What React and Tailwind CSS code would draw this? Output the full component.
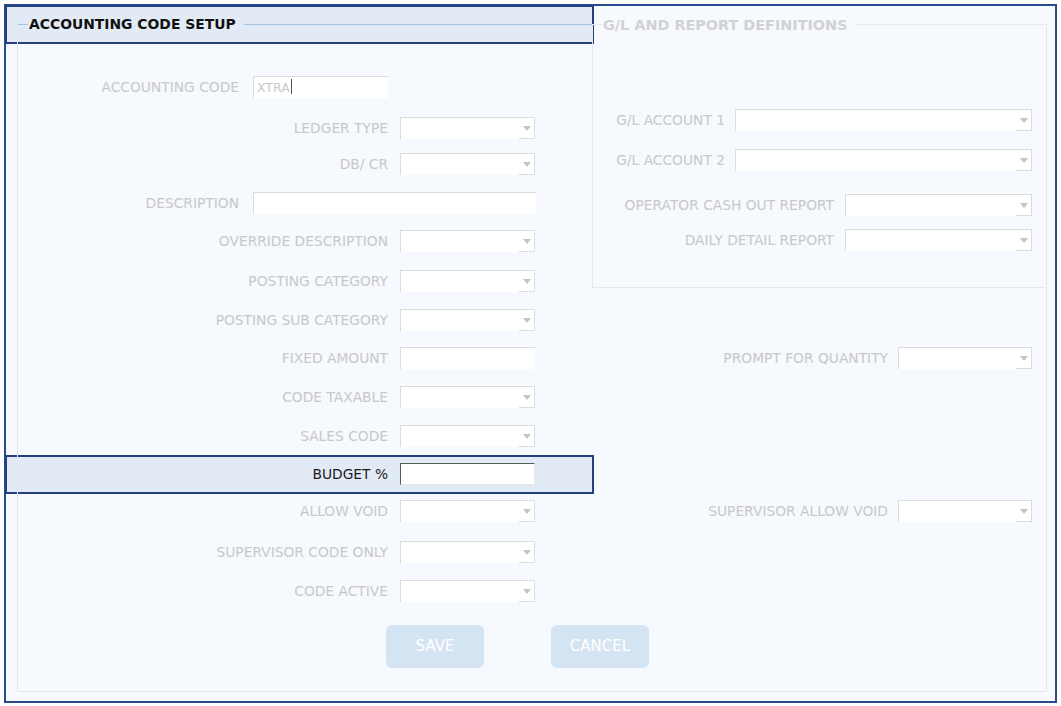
import React from "react";

const font = { fontFamily: '"DejaVu Sans", Verdana, sans-serif' };

function Arrow() {
  return (
    <div className="flex h-full w-[16px] items-center justify-center border-b border-r border-[#dcdcdc] bg-white">
      <svg width="8" height="5" viewBox="0 0 8 5">
        <polygon points="0,0 8,0 4,5" fill="#c4c4c4" />
      </svg>
    </div>
  );
}

function Select({ w }) {
  return (
    <div className={`flex h-[22px] shrink-0 justify-end border-l border-t border-[#dcdcdc] bg-white ${w}`}>
      <Arrow />
    </div>
  );
}

function TextBox({ w, value, active }) {
  return (
    <div
      className={`flex h-[22px] shrink-0 items-center bg-white pl-[3px] text-[12.5px] ${w} ${
        active
          ? "border-l border-t border-[#5a5a5a] border-r border-b border-r-[#e6e6e6] border-b-[#e6e6e6]"
          : "border-l border-t border-[#dcdcdc]"
      }`}
    >
      {value ? (
        <span className="text-[#c9c9c9]">
          {value}
          <span className="ml-px inline-block h-[15px] w-px translate-y-[2px] bg-[#555]" />
        </span>
      ) : null}
    </div>
  );
}

function Row({ label, labelW, gap, children, mt, dark }) {
  return (
    <div className={`flex h-[22px] items-center ${mt}`}>
      <div
        className={`shrink-0 translate-y-[1px] whitespace-nowrap text-right text-[13.8px] leading-none ${labelW} ${
          dark ? "text-[#1a1a1a]" : "text-[#c8c8c8]"
        }`}
      >
        {label}
      </div>
      <div className={`shrink-0 ${gap}`} />
      {children}
    </div>
  );
}

function LegendRow({ title, lineColor, textColor, lead, size }) {
  return (
    <div className="-mt-[10px] flex h-[20px] items-center">
      <div className={`h-px shrink-0 ${lead} ${lineColor}`} />
      <div className={`translate-y-[1px] whitespace-nowrap pl-px pr-[8px] font-bold leading-none ${size} ${textColor}`}>
        {title}
      </div>
      <div className={`h-px flex-1 ${lineColor}`} />
    </div>
  );
}

export default function App() {
  return (
    <div className="h-[706px] w-[1061px] bg-white pl-[4px] pt-[4px]" style={font}>
      <div className="relative h-[699px] w-[1053px] border-2 border-[#2a4a8b] bg-[#f6f9fd]">
        {/* highlight overlays */}
        <div className="absolute -left-px -top-px z-0 h-[39px] w-[589px] border-2 border-[#23407f] bg-[#e2ebf5]" />
        <div className="absolute -left-px top-[449px] z-0 h-[39px] w-[589px] border-2 border-[#23407f] bg-[#e2ebf5]" />

        <div className="relative z-10 ml-[11px] mt-[18px] flex h-[668px] w-[1030px] border-x border-b border-[#e1e8f0]">
          {/* left column */}
          <div className="flex w-[574px] shrink-0 flex-col">
            <LegendRow
              title="ACCOUNTING CODE SETUP"
              lead="w-[10px]"
              size="text-[13.9px]"
              lineColor="bg-[#a9c2df]"
              textColor="text-[#111]"
            />
            <Row label="ACCOUNTING CODE" labelW="w-[221px]" gap="w-[14px]" mt="mt-[42px]">
              <TextBox w="w-[135px]" value="XTRA" />
            </Row>
            <Row label="LEDGER TYPE" labelW="w-[370px]" gap="w-[12px]" mt="mt-[19px]">
              <Select w="w-[135px]" />
            </Row>
            <Row label="DB/ CR" labelW="w-[370px]" gap="w-[12px]" mt="mt-[14px]">
              <Select w="w-[135px]" />
            </Row>
            <Row label="DESCRIPTION" labelW="w-[221px]" gap="w-[14px]" mt="mt-[17px]">
              <TextBox w="w-[283px]" />
            </Row>
            <Row label="OVERRIDE DESCRIPTION" labelW="w-[370px]" gap="w-[12px]" mt="mt-[16px]">
              <Select w="w-[135px]" />
            </Row>
            <Row label="POSTING CATEGORY" labelW="w-[370px]" gap="w-[12px]" mt="mt-[18px]">
              <Select w="w-[135px]" />
            </Row>
            <Row label="POSTING SUB CATEGORY" labelW="w-[370px]" gap="w-[12px]" mt="mt-[17px]">
              <Select w="w-[135px]" />
            </Row>
            <Row label="FIXED AMOUNT" labelW="w-[370px]" gap="w-[12px]" mt="mt-[16px]">
              <TextBox w="w-[135px]" />
            </Row>
            <Row label="CODE TAXABLE" labelW="w-[370px]" gap="w-[12px]" mt="mt-[17px]">
              <Select w="w-[135px]" />
            </Row>
            <Row label="SALES CODE" labelW="w-[370px]" gap="w-[12px]" mt="mt-[17px]">
              <Select w="w-[135px]" />
            </Row>
            <Row label="BUDGET %" labelW="w-[370px]" gap="w-[12px]" mt="mt-[16px]" dark>
              <TextBox w="w-[135px]" active />
            </Row>
            <Row label="ALLOW VOID" labelW="w-[370px]" gap="w-[12px]" mt="mt-[15px]">
              <Select w="w-[135px]" />
            </Row>
            <Row label="SUPERVISOR CODE ONLY" labelW="w-[370px]" gap="w-[12px]" mt="mt-[19px]">
              <Select w="w-[135px]" />
            </Row>
            <Row label="CODE ACTIVE" labelW="w-[370px]" gap="w-[12px]" mt="mt-[17px]">
              <Select w="w-[135px]" />
            </Row>

            <div className="mt-[23px] flex">
              <button className="ml-[368px] h-[43px] w-[98px] shrink-0 rounded-[6px] bg-[#d5e4f2] text-[15px] text-white">
                SAVE
              </button>
              <button className="ml-[67px] h-[43px] w-[98px] shrink-0 rounded-[6px] bg-[#d5e4f2] text-[15px] text-white">
                CANCEL
              </button>
            </div>
          </div>

          {/* right column */}
          <div className="flex flex-1 flex-col">
            <div className="flex h-[264px] flex-col border-b border-l border-[#e1e8f0]">
              <LegendRow
                title="G/L AND REPORT DEFINITIONS"
                lead="w-[9px]"
                size="text-[14.4px]"
                lineColor="bg-[#e4ebf2]"
                textColor="text-[#d2d2d2]"
              />
              <Row label="G/L ACCOUNT 1" labelW="w-[132px]" gap="w-[10px]" mt="mt-[75px]">
                <Select w="w-[297px]" />
              </Row>
              <Row label="G/L ACCOUNT 2" labelW="w-[132px]" gap="w-[10px]" mt="mt-[18px]">
                <Select w="w-[297px]" />
              </Row>
              <Row label="OPERATOR CASH OUT REPORT" labelW="w-[241px]" gap="w-[11px]" mt="mt-[23px]">
                <Select w="w-[187px]" />
              </Row>
              <Row label="DAILY DETAIL REPORT" labelW="w-[241px]" gap="w-[11px]" mt="mt-[13px]">
                <Select w="w-[187px]" />
              </Row>
            </div>
            <Row label="PROMPT FOR QUANTITY" labelW="w-[296px]" gap="w-[10px]" mt="mt-[59px]">
              <Select w="w-[134px]" />
            </Row>
            <Row label="SUPERVISOR ALLOW VOID" labelW="w-[296px]" gap="w-[10px]" mt="mt-[131px]">
              <Select w="w-[134px]" />
            </Row>
          </div>
        </div>
      </div>
    </div>
  );
}
